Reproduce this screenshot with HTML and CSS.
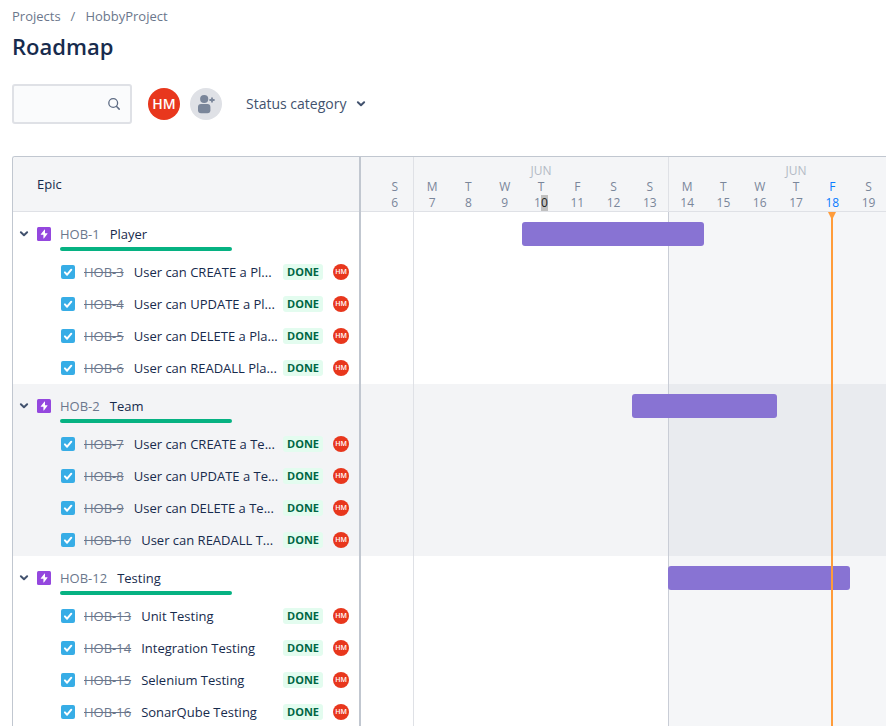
FILE: index.html
```html
<!DOCTYPE html>
<html lang="en">
<head>
<meta charset="utf-8">
<meta name="viewport" content="width=device-width, initial-scale=1">
<title>Roadmap - HobbyProject</title>
<link rel="stylesheet" href="styles.css">
</head>
<body>
<svg class="sprite" aria-hidden="true">
  <symbol id="chevron" viewBox="0 0 10 6"><path d="M1.9 1.3 5 4.2 8.1 1.3" fill="none" stroke="currentColor" stroke-width="2" stroke-linecap="round" stroke-linejoin="round"/></symbol>
  <symbol id="bolt" viewBox="0 0 14 14"><rect width="14" height="14" rx="1.5" fill="#9447de"/><path d="M7.6 2.6 3.8 7.2c-.2.3 0 .6.3.6h2.3v3.4c0 .3.3.4.5.2l3.6-4.6c.2-.3 0-.6-.3-.6H8V2.8c0-.3-.3-.4-.4-.2Z" fill="#fff"/></symbol>
  <symbol id="tick" viewBox="0 0 14 14"><path d="m3.9 7.4 2.2 2.3 4.2-5" fill="none" stroke="#fff" stroke-width="2" stroke-linecap="round" stroke-linejoin="round"/></symbol>
</svg>
<div class="page">
  <nav class="breadcrumbs" aria-label="Breadcrumbs"><a href="#">Projects</a><span>/</span><a href="#">HobbyProject</a></nav>
  <h1>Roadmap</h1>
  <div class="toolbar">
    <label class="search">
      <input type="text" aria-label="Search roadmap">
      <svg viewBox="0 0 14 14" aria-hidden="true"><circle cx="6.2" cy="6" r="4.4" fill="none" stroke="currentColor" stroke-width="1.3"/><path d="m9.6 9.5 2.6 2.6" stroke="currentColor" stroke-width="1.5" stroke-linecap="round"/></svg>
    </label>
    <button class="avatar avatar-large" type="button">HM</button>
    <button class="add-person" type="button" aria-label="Add people">
      <svg viewBox="0 0 18 20" aria-hidden="true"><circle cx="7.2" cy="5" r="4.1"/><path d="M1 13a3 3 0 0 1 3-3h6.4a3 3 0 0 1 3 3v3.2a3 3 0 0 1-3 3H4a3 3 0 0 1-3-3Z"/><path d="M15 3.4v5.2M12.4 6h5.2" fill="none" stroke="currentColor" stroke-width="1.8"/></svg>
    </button>
    <button class="filter" type="button">Status category<svg class="chevron" aria-hidden="true"><use href="#chevron"/></svg></button>
  </div>

  <main class="roadmap">
    <section class="epics">
      <h2 class="epics-head">Epic</h2>
      <section class="group">
        <div class="epic"><button class="toggle" type="button" aria-label="Collapse"><svg class="chevron" aria-hidden="true"><use href="#chevron"/></svg></button><svg class="type" aria-hidden="true"><use href="#bolt"/></svg><div class="epic-text"><span class="key">HOB-1</span><span class="name">Player</span></div><div class="progress"></div></div>
        <ul>
          <li class="task"><label class="check"><input type="checkbox" checked aria-label="HOB-3"><svg aria-hidden="true"><use href="#tick"/></svg></label><s class="key">HOB-3</s><span class="name">User can CREATE a Pl...</span><span class="status">DONE</span><span class="avatar">HM</span></li>
          <li class="task"><label class="check"><input type="checkbox" checked aria-label="HOB-4"><svg aria-hidden="true"><use href="#tick"/></svg></label><s class="key">HOB-4</s><span class="name">User can UPDATE a Pl...</span><span class="status">DONE</span><span class="avatar">HM</span></li>
          <li class="task"><label class="check"><input type="checkbox" checked aria-label="HOB-5"><svg aria-hidden="true"><use href="#tick"/></svg></label><s class="key">HOB-5</s><span class="name">User can DELETE a Pla...</span><span class="status">DONE</span><span class="avatar">HM</span></li>
          <li class="task"><label class="check"><input type="checkbox" checked aria-label="HOB-6"><svg aria-hidden="true"><use href="#tick"/></svg></label><s class="key">HOB-6</s><span class="name">User can READALL Pla...</span><span class="status">DONE</span><span class="avatar">HM</span></li>
        </ul>
      </section>
      <section class="group">
        <div class="epic"><button class="toggle" type="button" aria-label="Collapse"><svg class="chevron" aria-hidden="true"><use href="#chevron"/></svg></button><svg class="type" aria-hidden="true"><use href="#bolt"/></svg><div class="epic-text"><span class="key">HOB-2</span><span class="name">Team</span></div><div class="progress"></div></div>
        <ul>
          <li class="task"><label class="check"><input type="checkbox" checked aria-label="HOB-7"><svg aria-hidden="true"><use href="#tick"/></svg></label><s class="key">HOB-7</s><span class="name">User can CREATE a Te...</span><span class="status">DONE</span><span class="avatar">HM</span></li>
          <li class="task"><label class="check"><input type="checkbox" checked aria-label="HOB-8"><svg aria-hidden="true"><use href="#tick"/></svg></label><s class="key">HOB-8</s><span class="name">User can UPDATE a Te...</span><span class="status">DONE</span><span class="avatar">HM</span></li>
          <li class="task"><label class="check"><input type="checkbox" checked aria-label="HOB-9"><svg aria-hidden="true"><use href="#tick"/></svg></label><s class="key">HOB-9</s><span class="name">User can DELETE a Te...</span><span class="status">DONE</span><span class="avatar">HM</span></li>
          <li class="task"><label class="check"><input type="checkbox" checked aria-label="HOB-10"><svg aria-hidden="true"><use href="#tick"/></svg></label><s class="key">HOB-10</s><span class="name">User can READALL T...</span><span class="status">DONE</span><span class="avatar">HM</span></li>
        </ul>
      </section>
      <section class="group">
        <div class="epic"><button class="toggle" type="button" aria-label="Collapse"><svg class="chevron" aria-hidden="true"><use href="#chevron"/></svg></button><svg class="type" aria-hidden="true"><use href="#bolt"/></svg><div class="epic-text"><span class="key">HOB-12</span><span class="name">Testing</span></div><div class="progress"></div></div>
        <ul>
          <li class="task"><label class="check"><input type="checkbox" checked aria-label="HOB-13"><svg aria-hidden="true"><use href="#tick"/></svg></label><s class="key">HOB-13</s><span class="name">Unit Testing</span><span class="status">DONE</span><span class="avatar">HM</span></li>
          <li class="task"><label class="check"><input type="checkbox" checked aria-label="HOB-14"><svg aria-hidden="true"><use href="#tick"/></svg></label><s class="key">HOB-14</s><span class="name">Integration Testing</span><span class="status">DONE</span><span class="avatar">HM</span></li>
          <li class="task"><label class="check"><input type="checkbox" checked aria-label="HOB-15"><svg aria-hidden="true"><use href="#tick"/></svg></label><s class="key">HOB-15</s><span class="name">Selenium Testing</span><span class="status">DONE</span><span class="avatar">HM</span></li>
          <li class="task"><label class="check"><input type="checkbox" checked aria-label="HOB-16"><svg aria-hidden="true"><use href="#tick"/></svg></label><s class="key">HOB-16</s><span class="name">SonarQube Testing</span><span class="status">DONE</span><span class="avatar">HM</span></li>
        </ul>
      </section>
    </section>

    <section class="timeline" aria-label="Timeline">
      <div class="calendar">
        <header class="weeks">
          <div class="week"><div class="days">
            <div class="day first-visible">S<br>6</div>
          </div></div>
          <div class="week"><div class="month">JUN</div><div class="days">
            <div class="day">M<br>7</div><div class="day">T<br>8</div><div class="day">W<br>9</div><div class="day">T<br>1<mark>0</mark></div><div class="day">F<br>11</div><div class="day">S<br>12</div><div class="day">S<br>13</div>
          </div></div>
          <div class="week"><div class="month">JUN</div><div class="days">
            <div class="day">M<br>14</div><div class="day">T<br>15</div><div class="day">W<br>16</div><div class="day">T<br>17</div><div class="day today">F<br>18</div><div class="day">S<br>19</div>
          </div></div>
        </header>
        <div class="chart">
          <div class="lanes">
            <div class="lane"><div class="bar" style="grid-column: 11 / 16"></div></div>
            <div class="lane"><div class="bar" style="grid-column: 14 / 18"></div></div>
            <div class="lane"><div class="bar" style="grid-column: 15 / 20"></div></div>
          </div>
          <div class="overlay">
            <div class="week-start"></div>
            <div class="current-week"></div>
            <svg class="marker-head" viewBox="0 0 8 7" aria-hidden="true"><path d="M0 0h8L5 6H3Z" fill="#ff9c3b"/></svg>
            <div class="marker"></div>
          </div>
        </div>
      </div>
    </section>
  </main>
</div>
</body>
</html>
```

FILE: styles.css
```css
:root {
  --week: 255px;
  --text: #172b4d;
  --muted: #6b778c;
  --line: #dfe1e6;
  --edge: #c1c7d0;
  --surface: #f4f5f7;
}

* { box-sizing: border-box; }

body {
  margin: 0;
  background: #fff;
  color: var(--text);
  font: 13px/20px "Open Sans", "Noto Sans", sans-serif;
}

button { border: 0; padding: 0; background: none; font: inherit; color: inherit; }
ul { list-style: none; margin: 0; padding: 0; }
svg { display: block; }
.sprite { display: none; }

.page {
  display: flex;
  flex-direction: column;
  height: 100vh;
  padding: 6px 0 0 12px;
  overflow: hidden;
}

.breadcrumbs { display: flex; gap: 10px; color: var(--muted); }
.breadcrumbs a { color: inherit; text-decoration: none; }

h1 { margin: 4px 0 0; font-size: 22px; line-height: 32px; font-weight: 600; }

.toolbar { display: flex; align-items: center; margin: 22px 0 32px; }

.search {
  display: flex;
  align-items: center;
  width: 120px;
  height: 40px;
  padding: 0 9px;
  border: 2px solid var(--line);
  border-radius: 3px;
  background: #fafbfc;
  color: #5e6c84;
}
.search input { flex: 1; min-width: 0; border: 0; outline: 0; background: none; font: inherit; color: var(--text); }
.search svg { width: 14px; height: 14px; }

.avatar {
  display: grid;
  place-items: center;
  flex: none;
  width: 16px;
  height: 16px;
  border-radius: 50%;
  background: #e8371d;
  color: #fff;
  font-size: 7px;
  line-height: 16px;
  font-weight: 600;
}
.avatar-large { width: 32px; height: 32px; margin-left: 16px; font-size: 14px; }

.add-person {
  display: grid;
  place-items: center;
  width: 32px;
  height: 32px;
  margin-left: 10px;
  border-radius: 50%;
  background: var(--line);
  color: #7a869a;
}
.add-person svg { width: 18px; height: 20px; fill: currentColor; }

.filter { display: flex; align-items: center; gap: 10px; margin-left: 24px; color: #42526e; font-size: 14px; font-weight: 500; }
.chevron { width: 10px; height: 6px; color: #42526e; }

.roadmap {
  display: flex;
  flex: 1;
  min-height: 0;
  overflow: hidden;
  border: 1px solid var(--edge);
  border-width: 1px 0 0 1px;
  border-radius: 3px 0 0 0;
}

.epics { flex: none; width: 348px; border-right: 2px solid var(--edge); }
.epics-head {
  height: 55px;
  margin: 0;
  padding-left: 24px;
  border-bottom: 1px solid var(--line);
  background: var(--surface);
  font-size: 13px;
  line-height: 54px;
  font-weight: 400;
}

.group:nth-of-type(even), .lane:nth-child(even) { background: #f3f4f6; }

.epic {
  display: grid;
  grid-template: 20px 10px / 10px 15px 172px;
  column-gap: 8px;
  align-items: center;
  height: 44px;
  padding: 12px 0 2px 6px;
}
.toggle { height: 20px; }
.type { width: 14px; height: 14px; }
.epic-text, .task { display: flex; align-items: center; }
.key { margin-right: 10px; color: var(--muted); }
.progress { grid-column: 3; height: 4px; border-radius: 2px; background: #06b282; }

.task { height: 32px; padding: 0 10px 0 48px; }
.task .name { flex: 1; white-space: nowrap; }
.check { display: grid; flex: none; margin-right: 9px; }
.check input, .check svg { grid-area: 1 / 1; width: 14px; height: 14px; margin: 0; }
.check input { appearance: none; border-radius: 2px; background: #37ade6; }
.check svg { pointer-events: none; }

.status {
  margin-right: 10px;
  padding: 0 4px;
  border-radius: 3px;
  background: #e3fcef;
  color: #006644;
  font-size: 11px;
  line-height: 16px;
  font-weight: 700;
}

.timeline { flex: 1; min-width: 0; overflow: hidden; }
/* The earliest week is scrolled mostly out of view. */
.calendar { width: calc(var(--week) * 3); margin-left: -203px; }
.weeks { display: grid; grid-template-columns: repeat(3, var(--week)); height: 55px; border-bottom: 1px solid var(--line); background: var(--surface); }
.week { display: flex; flex-direction: column; justify-content: flex-end; color: #7a869a; font-size: 12px; line-height: 16px; text-align: center; }
.week + .week { border-left: 1px solid var(--line); }
.month { color: #b3bac5; }
.days { display: grid; grid-template-columns: repeat(7, 1fr); }
.first-visible { grid-column: 7; }
.today { color: #0a7cff; }
mark { display: inline-block; background: #c0c0c0; color: #222; }

.chart { display: grid; }
.lanes, .overlay { grid-area: 1 / 1; }
.lane, .overlay { display: grid; grid-template-columns: repeat(21, 1fr); }
.lane { height: 172px; }
.overlay { grid-template-rows: 100%; }
.overlay > * { grid-row: 1; }
.week-start { grid-column: 8 / 15; border-left: 1px solid var(--line); }
.current-week { grid-column: 15 / 22; border-left: 1px solid #c9cdd6; background: rgba(9, 30, 66, 0.04); }
.marker, .marker-head { grid-column: 19; justify-self: center; }
.marker { width: 2px; background: #ff9c3b; }
.marker-head { width: 8px; height: 7px; }

/* Bars sit above the week shading, the marker above the bars. */
.bar { position: relative; z-index: 1; height: 24px; margin-top: 10px; border-radius: 3px; background: #8873d3; }
.marker, .marker-head { position: relative; z-index: 2; }
```
